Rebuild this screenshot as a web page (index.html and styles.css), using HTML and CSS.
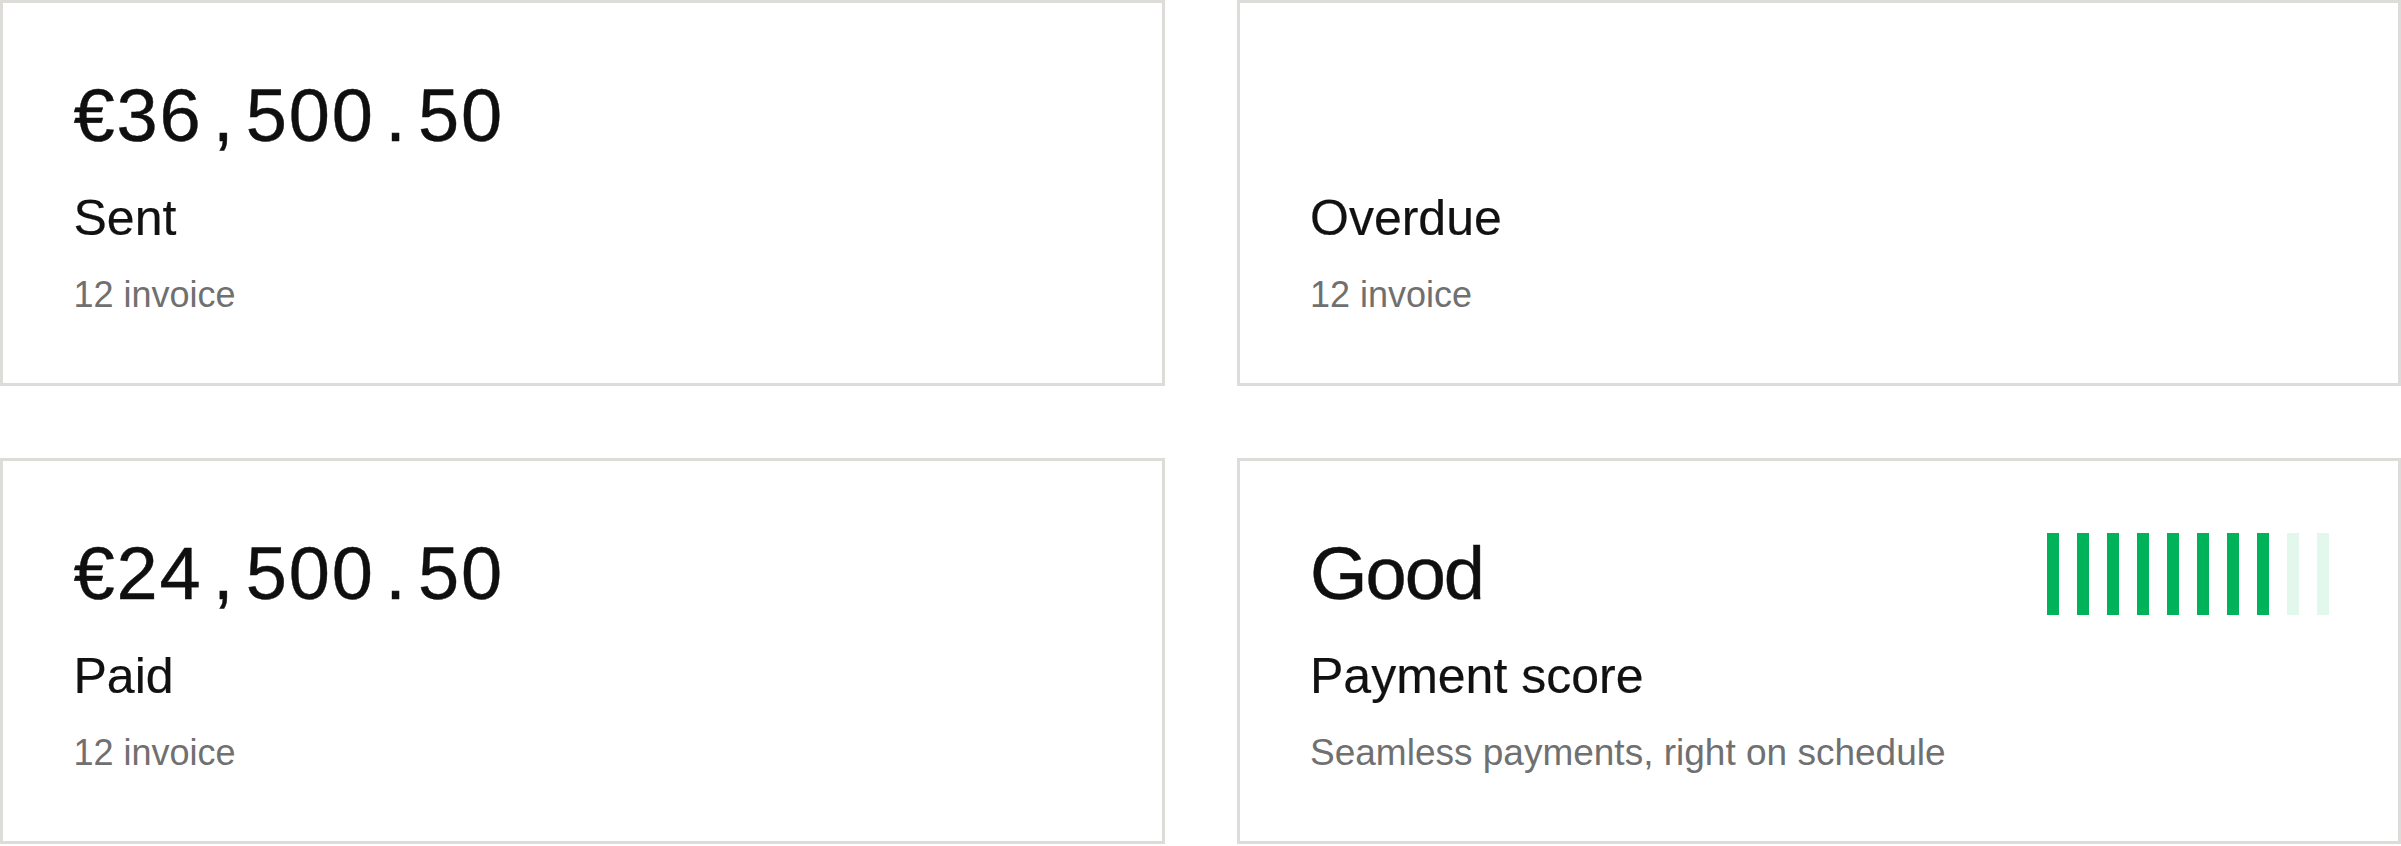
FILE: index.html
```html
<!DOCTYPE html>
<html lang="en">
<head>
<meta charset="utf-8">
<title>Invoices overview</title>
<link rel="stylesheet" href="styles.css">
</head>
<body>
<main class="grid">
  <section class="card">
    <div class="head"><div class="amount">€36<span class="sep">,</span>500<span class="sep">.</span>50</div></div>
    <div class="label">Sent</div>
    <div class="sub">12 invoice</div>
  </section>
  <section class="card">
    <div class="head"><div class="amount"></div></div>
    <div class="label">Overdue</div>
    <div class="sub">12 invoice</div>
  </section>
  <section class="card">
    <div class="head"><div class="amount">€24<span class="sep">,</span>500<span class="sep">.</span>50</div></div>
    <div class="label">Paid</div>
    <div class="sub">12 invoice</div>
  </section>
  <section class="card">
    <div class="head">
      <div class="amount word">Good</div>
      <div class="score" aria-label="Score 8 of 10">
        <span class="bar on"></span><span class="bar on"></span><span class="bar on"></span><span class="bar on"></span><span class="bar on"></span><span class="bar on"></span><span class="bar on"></span><span class="bar on"></span><span class="bar"></span><span class="bar"></span>
      </div>
    </div>
    <div class="label">Payment score</div>
    <div class="sub desc">Seamless payments, right on schedule</div>
  </section>
</main>
</body>
</html>
```
FILE: styles.css
```css
html, body {
  margin: 0;
  padding: 0;
  background: #ffffff;
}

body {
  font-family: "Liberation Sans", Arial, sans-serif;
  color: #111111;
}

.grid {
  display: grid;
  grid-template-columns: 1fr 1fr;
  column-gap: 72px;
  row-gap: 72px;
}

.card {
  border: 3px solid #dddcd8;
  padding: 69px 69px 67px 70.5px;
  display: flex;
  flex-direction: column;
}

.head {
  display: flex;
  align-items: center;
  justify-content: space-between;
  height: 88px;
}

.amount {
  font-size: 74px;
  line-height: 88px;
  height: 88px;
  letter-spacing: 1.9px;
  color: #0f0f0f;
  white-space: nowrap;
  -webkit-text-stroke: 0.4px #0f0f0f;
}

.amount .sep {
  margin: 0 10.3px;
}

.amount.word {
  letter-spacing: -2px;
}

.score {
  display: flex;
  gap: 18px;
  height: 82px;
}

.bar {
  width: 12px;
  height: 82px;
  background: #e3f8ed;
}

.bar.on {
  background: #00b35b;
}

.label {
  margin-top: 29px;
  font-size: 50px;
  line-height: 58px;
  color: #111111;
  -webkit-text-stroke: 0.2px #111111;
}

.sub {
  margin-top: 27px;
  font-size: 36px;
  line-height: 42px;
  color: #707070;
}

.sub.desc {
  font-size: 37px;
}
```
